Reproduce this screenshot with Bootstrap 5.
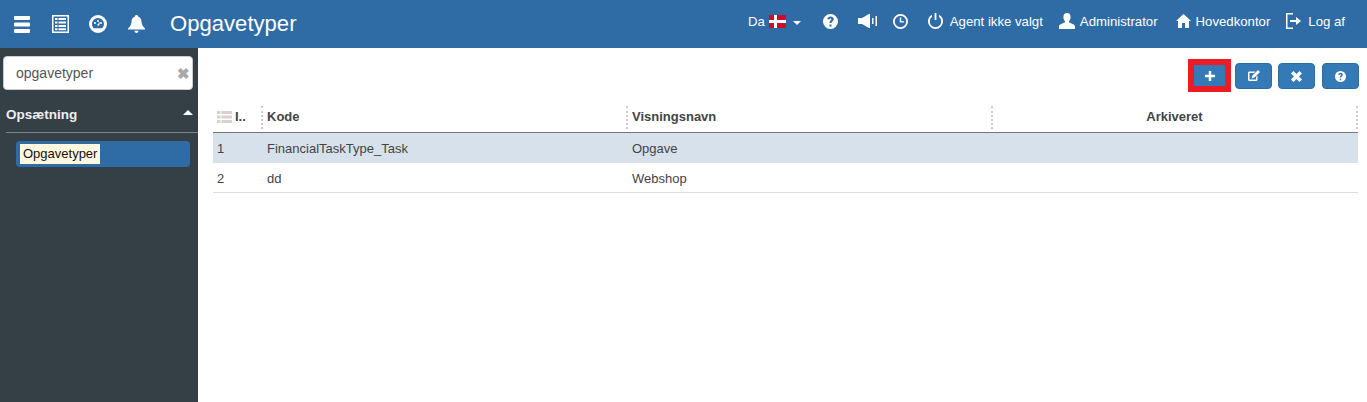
<!DOCTYPE html>
<html lang="da">
<head>
<meta charset="utf-8">
<title>Opgavetyper</title>
<link rel="stylesheet" href="https://cdn.jsdelivr.net/npm/bootstrap@5.3.0/dist/css/bootstrap.min.css">
<style>
html,body{height:100%;overflow:hidden}
body{font-family:"Liberation Sans",Arial,sans-serif;font-size:13px;color:#333;background:#fff}
.shell{height:402px}
.topbar{height:48px;background:#2f6ca5;color:#fff;padding:0 22px 0 14px}
.topbar svg{display:block;flex:none;fill:#fff}
.top-title{font-size:22.1px;line-height:48px;margin-left:25px}
.ti-1{margin-left:22px}.ti-2{margin-left:20px}.ti-3{margin-left:21px}
.rt{font-size:13.2px;white-space:nowrap;padding-bottom:5px}
.lang-caret{width:0;height:0;border:4px solid transparent;border-top-color:#fff;border-bottom:0;margin-left:7px;margin-top:4px}
.side{width:198px;background:#353f46;color:#fff;flex:none}
.side-search{margin:8px 5px 0 3px;height:34px;background:#fff;border:1px solid #ccc;border-radius:4px;padding:0 2px 0 12px;font-size:14px;color:#555}
.side-x{color:#a8a8a8;font-size:15px;font-weight:700;line-height:1}
.side-head{margin:14px 5px 0 6px;height:28px;padding-bottom:6px;font-weight:700;font-size:13.5px;color:#eee;line-height:20px}
.side-caret{width:0;height:0;border:5.5px solid transparent;border-bottom-color:#fff;border-top:0;margin-top:-6px}
.side-rule{height:1px;background:#7b8287;margin-left:6px}
.side-item{margin:8px 8px 0 16px;height:26px;background:#2f6ca5;border-radius:4px;padding:0 4px}
.side-mark{background:#fff8e1;color:#111;padding:0 3px;height:20px;line-height:20px;width:80px;font-size:13px}
.main{min-width:0;padding:0 8px 0 15px}
.tools{height:55px;padding:15px 0 0;gap:6px}
.tool-b{width:37px;height:26px;padding:0;background:#337ab7;border:1px solid #2e6da4;border-radius:4px;display:flex;align-items:center;justify-content:center}
.tool-b svg{fill:#fff;display:block}
.tool-add{width:43px;height:33px;border:6px solid #ed1c24;border-radius:0;margin-right:-2px;margin-top:-4px}
.tool-help{margin-left:1px}
.grid-t{width:1145px;table-layout:fixed;border-collapse:collapse;margin:0;font-size:13px;color:#444}
.grid-t th{height:29px;padding:0 0 2px 4px;font-size:13px;color:#444;font-weight:700;position:relative;border-bottom:1px solid #777;background:#fff;white-space:nowrap;overflow:hidden}
.grid-t th::after{content:"";position:absolute;right:0;top:3px;height:23px;border-right:2px dotted #ccc}
.grid-t th.th-mid{padding:0 2px 2px 0}
.grid-t td{height:30px;padding:4px 0 0 4px;border-bottom:1px solid #ddd;background:#fff}
.grid-t tr.sel td{background:#d6e1ec}
.grid-t .num{padding-left:4px}
.th-tag{fill:#d9d0d0;vertical-align:-2px;margin:0 3px 0 0}
</style>
</head>
<body>
<div class="shell d-flex flex-column">
  <header class="topbar d-flex align-items-center">
    <svg width="16" height="17" viewBox="0 0 16 17"><rect y="0" width="16" height="4" rx="1"/><rect y="6.500" width="16" height="4" rx="1"/><rect y="13" width="16" height="4" rx="1"/></svg>
    <svg class="ti-1" width="17" height="18" viewBox="0 0 17 18"><path fill-rule="evenodd" d="M0 0h17v18H0zM1.500 1.500v15h14v-15z"/><path d="M3 3h2.500v2H3zM6.500 3H14v2H6.500zM3 6.500h2.500v2H3zM6.500 6.500H14v2H6.500zM3 10h2.500v2H3zM6.500 10H14v2H6.500zM3 13.300h2.500v2H3zM6.500 13.300H14v2H6.500z"/></svg>
    <svg class="ti-2" width="18" height="18" viewBox="0 0 18 18"><path fill-rule="evenodd" d="M9 0a9 9 0 1 1 0 18A9 9 0 0 1 9 0zm0 3a6 6 0 0 0-6 6c0 1.700.7 3.200 1.800 4.300h8.400A6 6 0 0 0 15 9a6 6 0 0 0-6-6z"/><circle cx="6" cy="8" r="1"/><circle cx="9" cy="6" r="1"/><circle cx="12" cy="8" r="1"/><path d="M8 10l3-3-1 4z"/></svg>
    <svg class="ti-3" width="17" height="18" viewBox="0 0 17 18"><path d="M8.500 0c1 0 1.400.6 1.500 1.400 2.200.6 3.300 2.500 3.500 5 .2 3 1 4.500 3.500 7v1H0v-1c2.500-2.500 3.300-4 3.500-7 .2-2.500 1.300-4.400 3.500-5C7.100.6 7.500 0 8.500 0z"/><path d="M6.500 15.800h4c0 1.200-.8 2.200-2 2.200s-2-1-2-2.200z"/></svg>
    <div class="top-title">Opgavetyper</div>
    <div class="ms-auto d-flex align-items-center rt">
      <span>Da</span>
      <svg class="ms-1" width="17" height="13" viewBox="0 0 17 13"><rect width="17" height="13" fill="#c8102e"/><rect x="5" width="3" height="13" fill="#fff"/><rect y="5" width="17" height="3" fill="#fff"/></svg>
      <span class="lang-caret"></span>
      <svg style="margin-left:22px" width="15" height="15" viewBox="0 0 15 15"><path fill-rule="evenodd" d="M7.500 0a7.500 7.500 0 1 1 0 15 7.500 7.500 0 0 1 0-15zM6.500 10.500v2h2v-2zM7.500 2.500C5.700 2.500 4.500 3.500 4.300 5.200l2 .3c.1-.7.500-1 1.100-1 .6 0 1 .3 1 .8 0 .4-.2.700-.9 1.200-.7.600-1 1.100-1 2.500h2c0-.8.200-1.100.9-1.600.8-.6 1.300-1.200 1.300-2.200 0-1.600-1.300-2.700-3.200-2.700z"/></svg>
      <svg style="margin-left:20px" width="19" height="14" viewBox="0 0 19 14"><path d="M0 4h4l7-4h1v14h-1L4 10H0zM14 4h1.500v6H14zM17.500 2H19v10h-1.500z"/></svg>
      <svg style="margin-left:16px" width="15" height="15" viewBox="0 0 15 15"><path fill-rule="evenodd" d="M7.500 0a7.500 7.500 0 1 1 0 15 7.500 7.500 0 0 1 0-15zm0 1.800a5.700 5.700 0 1 0 0 11.400 5.700 5.700 0 0 0 0-11.400z"/><path d="M6.800 3.500h1.400v3.700h3v1.400H6.800z"/></svg>
      <svg style="margin-left:20px" width="15" height="16" viewBox="0 0 15 16"><path d="M6.600 0h1.800v7H6.600zM4 1.800v2A5.500 5.500 0 0 0 1.800 8.500a5.700 5.700 0 0 0 11.400 0A5.500 5.500 0 0 0 11 3.800v-2A7.300 7.300 0 0 1 15 8.500a7.500 7.500 0 0 1-15 0A7.300 7.300 0 0 1 4 1.800z"/></svg>
      <span style="margin-left:7px">Agent ikke valgt</span>
      <svg style="margin-left:16px" width="16" height="16" viewBox="0 0 16 16"><path d="M8 0c2.200 0 3.600 1.600 3.600 4 0 1.700-.7 3.300-1.600 4.200v1c.3.800 6 1.500 6 4.300V16H0v-2.500c0-2.800 5.700-3.500 6-4.300v-1C5.100 7.300 4.400 5.700 4.400 4 4.400 1.600 5.800 0 8 0z"/></svg>
      <span style="margin-left:5px">Administrator</span>
      <svg style="margin-left:18px" width="15" height="14" viewBox="0 0 15 14"><path d="M7.500 0L15 7h-2v7H9V9H6v5H2V7H0z"/></svg>
      <span style="margin-left:5px">Hovedkontor</span>
      <svg style="margin-left:16px" width="15" height="16" viewBox="0 0 15 16"><path d="M0 0h7v1.500H1.500v13H7V16H0z"/><path d="M4 7h6V4l5 4-5 4V9H4z"/></svg>
      <span style="margin-left:7px">Log af</span>
    </div>
  </header>
  <div class="d-flex flex-grow-1">
    <aside class="side">
      <div class="side-search d-flex align-items-center justify-content-between"><span>opgavetyper</span><span class="side-x">✖</span></div>
      <div class="side-head d-flex align-items-center justify-content-between"><span>Opsætning</span><span class="side-caret"></span></div>
      <div class="side-rule"></div>
      <div class="side-item d-flex align-items-center"><span class="side-mark">Opgavetyper</span></div>
    </aside>
    <main class="main flex-grow-1">
      <div class="tools d-flex justify-content-end align-items-start">
        <button type="button" class="tool-b tool-add" aria-label="Ny"><svg width="10" height="10" viewBox="0 0 10 10"><path d="M3.750 0h2.500v3.750H10v2.500H6.250V10h-2.500V6.250H0v-2.500h3.750z"/></svg></button>
        <button type="button" class="tool-b" aria-label="Rediger"><svg width="13" height="12" viewBox="0 0 13 12"><path d="M2 1.500h6.500L7 3H2.500v6.500h6.500V7l1.500-1.500V9.500A1.500 1.500 0 0 1 9 11H2.500A1.500 1.500 0 0 1 1 9.500V3a1.500 1.500 0 0 1 1-1.500z"/><path d="M11 0l2 2-5.500 5.500L4.500 8.500l1-3z"/></svg></button>
        <button type="button" class="tool-b" aria-label="Slet"><svg width="11" height="11" viewBox="0 0 11 11"><path d="M2.500 0l3 3 3-3L11 2.500l-3 3 3 3L8.500 11l-3-3-3 3L0 8.500l3-3-3-3z"/></svg></button>
        <button type="button" class="tool-b tool-help" aria-label="Hjælp"><svg width="11" height="11" viewBox="0 0 15 15"><path fill-rule="evenodd" d="M7.500 0a7.500 7.500 0 1 1 0 15 7.500 7.500 0 0 1 0-15zM6.500 10.500v2h2v-2zM7.500 2.500C5.700 2.500 4.500 3.500 4.300 5.200l2 .3c.1-.7.500-1 1.100-1 .6 0 1 .3 1 .8 0 .4-.2.700-.9 1.200-.7.600-1 1.100-1 2.500h2c0-.8.200-1.100.9-1.600.8-.6 1.300-1.200 1.300-2.200 0-1.600-1.300-2.700-3.200-2.700z"/></svg></button>
      </div>
      <table class="grid-t">
        <colgroup><col style="width:50px"><col style="width:365px"><col style="width:365px"><col style="width:365px"></colgroup>
        <thead><tr>
          <th><svg class="th-tag" width="15" height="12" viewBox="0 0 15 12"><path d="M0 0h3.500v3H0zM4.500 0H15v3H4.500zM0 4.500h3.500v3H0zM4.500 4.500H15v3H4.500zM0 9h3.500v3H0zM4.500 9H15v3H4.500z"/></svg>I..</th>
          <th>Kode</th><th>Visningsnavn</th><th class="text-center th-mid">Arkiveret</th>
        </tr></thead>
        <tbody>
          <tr class="sel"><td class="num">1</td><td>FinancialTaskType_Task</td><td>Opgave</td><td></td></tr>
          <tr><td class="num">2</td><td>dd</td><td>Webshop</td><td></td></tr>
        </tbody>
      </table>
    </main>
  </div>
</div>
<script src="https://cdn.jsdelivr.net/npm/bootstrap@5.3.0/dist/js/bootstrap.bundle.min.js"></script>
</body>
</html>
